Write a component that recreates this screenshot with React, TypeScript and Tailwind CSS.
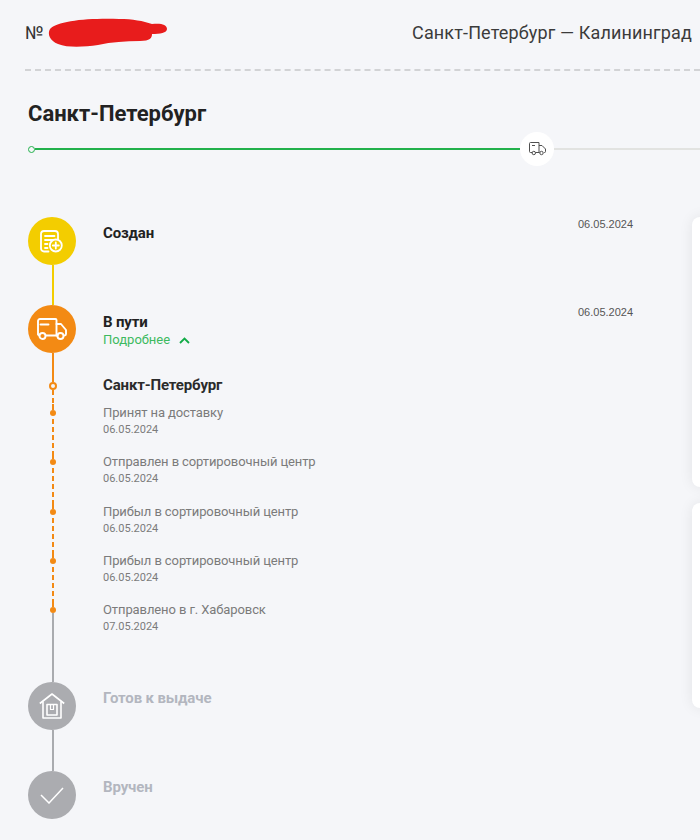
import React from 'react';

const events = [
  { title: 'Принят на доставку', date: '06.05.2024' },
  { title: 'Отправлен в сортировочный центр', date: '06.05.2024' },
  { title: 'Прибыл в сортировочный центр', date: '06.05.2024' },
  { title: 'Прибыл в сортировочный центр', date: '06.05.2024' },
  { title: 'Отправлено в г. Хабаровск', date: '07.05.2024' },
];

function SmallTruck() {
  return (
    <svg width="17" height="14" viewBox="0 0 17 14" fill="none" stroke="#4f4f4f" strokeWidth="1">
      <path d="M3 10.500H1.500a1 1 0 0 1-1-1V1.500a1 1 0 0 1 1-1H10v10H6.500" />
      <path d="M10 3.500h3l3.500 3.500v2.500a1 1 0 0 1-1 1h-.5M10 10.500h.5" />
      <circle cx="4.800" cy="11" r="1.700" />
      <circle cx="12.500" cy="11" r="1.700" />
      <path d="M3 3.500h3" />
    </svg>
  );
}

function CreatedIcon() {
  return (
    <svg width="24" height="23" viewBox="0 0 24 23" fill="none" stroke="#fff" strokeWidth="1.800" strokeLinecap="round">
      <path d="M8.500 21.500H4a3 3 0 0 1-3-3V4a3 3 0 0 1 3-3h11a3 3 0 0 1 3 3v5.500" />
      <path d="M5 6h9.500M5 10h8M5 14h2.500M5 18h2.500" />
      <circle cx="15.800" cy="15.500" r="6" />
      <path d="M15.800 12.500v6M12.800 15.500h6" />
    </svg>
  );
}

function TruckIcon() {
  return (
    <svg width="30" height="23" viewBox="0 0 30 23" fill="none" stroke="#fff" strokeWidth="1.900" strokeLinecap="round" strokeLinejoin="round">
      <path d="M2.200 17.500 1 16.500V3a2 2 0 0 1 2-2h15.500a1 1 0 0 1 1 1v15.500H9" />
      <path d="M19.500 6h4.500l5 6v4a1.500 1.500 0 0 1-1.500 1.500H27M19.500 17.500h1" />
      <circle cx="5.500" cy="18" r="3" />
      <circle cx="23.500" cy="18" r="3" />
      <path d="M3.500 6.500h8" />
    </svg>
  );
}

function StoreIcon() {
  return (
    <svg width="26" height="27" viewBox="0 0 26 27" fill="none" stroke="#fff" strokeWidth="1.600" strokeLinejoin="round">
      <path d="M.8 10.500 13 1l12.200 9.500" />
      <path d="M4 8.500v16.500h18V8.500" />
      <path d="M8 11.500h10V22H8z" />
      <path d="M11.500 12v4.500h3V12" strokeWidth="1.200" />
    </svg>
  );
}

function CheckIcon() {
  return (
    <svg width="24" height="17" viewBox="0 0 24 17" fill="none" stroke="#fff" strokeWidth="1.500">
      <path d="m1 8 8 8L23 1" />
    </svg>
  );
}

export default function App() {
  return (
    <div className="w-[700px] h-[840px] overflow-hidden bg-[#f5f6f9] text-[#222] font-['Roboto',sans-serif]">
      <div className="ml-[25px] h-[71px] flex items-center justify-between border-b-2 border-dashed border-[#d2d3d5] pr-2">
        <div className="flex items-center text-lg text-[#333] -mt-[4px]">
          <span>№</span>
          <svg width="122" height="30" viewBox="0 0 122 30" className="ml-[3px]">
            <path d="M3 11C10 3 40 0 72 1c14 0 24 2 33 5 8-1 15 0 15 5 0 4-7 5-15 5 0 4-2 7-12 7-15 0-28 1-42 4-14 2-30 3-40-1-8-3-11-10-8-15z" fill="#e81c1c" />
          </svg>
        </div>
        <div className="text-lg tracking-[0.14px] text-[#3b3b3b] -mt-[4px]">Санкт-Петербург — Калининград</div>
      </div>

      <div className="flex">
        <div className="w-[692px] shrink-0">
          <div className="ml-7 mt-[28px] text-[22px] leading-[30px] font-bold text-[#222]">Санкт-Петербург</div>

          <div className="flex items-center mt-[3px] h-[34px] ml-7 w-[672px]">
            <div className="w-[7px] h-[7px] rounded-full border border-[#22b14c] shrink-0" />
            <div className="w-[485px] h-0.5 bg-[#22b14c] shrink-0" />
            <div className="w-[34px] h-[34px] rounded-full bg-white flex items-center justify-center shrink-0">
              <SmallTruck />
            </div>
            <div className="flex-1 h-0.5 bg-[#e2e3e1]" />
          </div>

          <div className="mt-[51px] pl-7">
            <div className="flex h-[88px]">
              <div className="w-[50px] flex flex-col items-center">
                <div className="w-12 h-12 rounded-full bg-[#f3cd00] flex items-center justify-center shrink-0 self-start"><CreatedIcon /></div>
                <div className="w-0.5 flex-1 bg-[#f3cd00]" />
              </div>
              <div className="ml-[25px] w-[475px] pt-[6px] text-[15px] tracking-[-0.15px] leading-[20px] font-bold">Создан</div>
              <div className="text-[11px] leading-[14px] text-[#555] font-['Liberation_Sans',sans-serif]">06.05.2024</div>
            </div>

            <div className="flex h-[69px]">
              <div className="w-[50px] flex flex-col items-center">
                <div className="w-12 h-12 rounded-full bg-[#f38a14] flex items-center justify-center shrink-0 self-start"><TruckIcon /></div>
                <div className="w-0.5 flex-1 bg-[#f38a14]" />
              </div>
              <div className="ml-[25px] w-[475px] pt-[7px]">
                <div className="text-[15px] tracking-[-0.15px] leading-[20px] font-bold">В пути</div>
                <div className="flex items-center gap-[9px] text-[13px] leading-[16px] text-[#3dba5f]">
                  Подробнее
                  <svg width="11" height="7" viewBox="0 0 11 7" fill="none" stroke="#12ab47" strokeWidth="1.800"><path d="m1 6 4.500-4.500L10 6" /></svg>
                </div>
              </div>
              <div className="text-[11px] leading-[14px] text-[#555] font-['Liberation_Sans',sans-serif]">06.05.2024</div>
            </div>

            <div className="flex h-[30px]">
              <div className="w-[50px] flex flex-col items-center">
                <div className="w-0.5 h-[8px] bg-[#f38a14]" />
                <div className="w-2 h-2 rounded-full border-2 border-[#f38a14] shrink-0" />
                <div className="flex-1 w-0.5 bg-[repeating-linear-gradient(to_bottom,#f38a14_0,#f38a14_5px,transparent_5px,transparent_8px)]" />
              </div>
              <div className="ml-[25px] text-[15px] tracking-[-0.15px] leading-[20px] font-bold text-[#2b2b2b] pt-px">Санкт-Петербург</div>
            </div>

            {events.map((e, i) => (
              <div key={i} className="flex h-[49.3px]">
                <div className="w-[50px] flex flex-col items-center">
                  <div className="h-[6px] w-0.5 bg-[#f38a14]" />
                  <div className="rounded-full bg-[#f38a14] shrink-0 w-[6px] h-[6px]" />
                  {i < 4 ? <div className="flex-1 w-0.5 bg-[repeating-linear-gradient(to_bottom,transparent_0,transparent_3px,#f38a14_3px,#f38a14_8px)]" /> : <div className="flex-1 w-0.5 bg-[#a9abaf]" />}
                </div>
                <div className="ml-[25px]">
                  <div className="text-[13px] tracking-[-0.1px] leading-[18px] text-[#7b7b7b]">{e.title}</div>
                  <div className="text-[11px] leading-[16px] text-[#7b7b7b]">{e.date}</div>
                </div>
              </div>
            ))}

            <div className="flex h-[32px]">
              <div className="w-[50px] flex justify-center"><div className="w-0.5 h-full bg-[#a9abaf]" /></div>
            </div>

            <div className="flex h-[89px]">
              <div className="w-[50px] flex flex-col items-center">
                <div className="w-12 h-12 rounded-full bg-[#abacb0] flex items-center justify-center shrink-0 self-start"><StoreIcon /></div>
                <div className="w-0.5 flex-1 bg-[#a9abaf]" />
              </div>
              <div className="ml-[25px] pt-[6px] text-[15px] tracking-[-0.15px] leading-[20px] font-bold text-[#b3b6bf]">Готов к выдаче</div>
            </div>

            <div className="flex">
              <div className="w-12 h-12 mr-[2px] rounded-full bg-[#abacb0] flex items-center justify-center shrink-0"><CheckIcon /></div>
              <div className="ml-[25px] pt-[6px] text-[15px] tracking-[-0.15px] leading-[20px] font-bold text-[#b3b6bf]">Вручен</div>
            </div>
          </div>
        </div>

        <div className="w-[300px] shrink-0 flex flex-col gap-4 pt-[146px]">
          <div className="h-[270px] bg-white rounded-lg shadow-[0_0_14px_rgba(0,0,0,0.08)]" />
          <div className="h-[205px] bg-white rounded-lg shadow-[0_0_14px_rgba(0,0,0,0.08)]" />
        </div>
      </div>
    </div>
  );
}
